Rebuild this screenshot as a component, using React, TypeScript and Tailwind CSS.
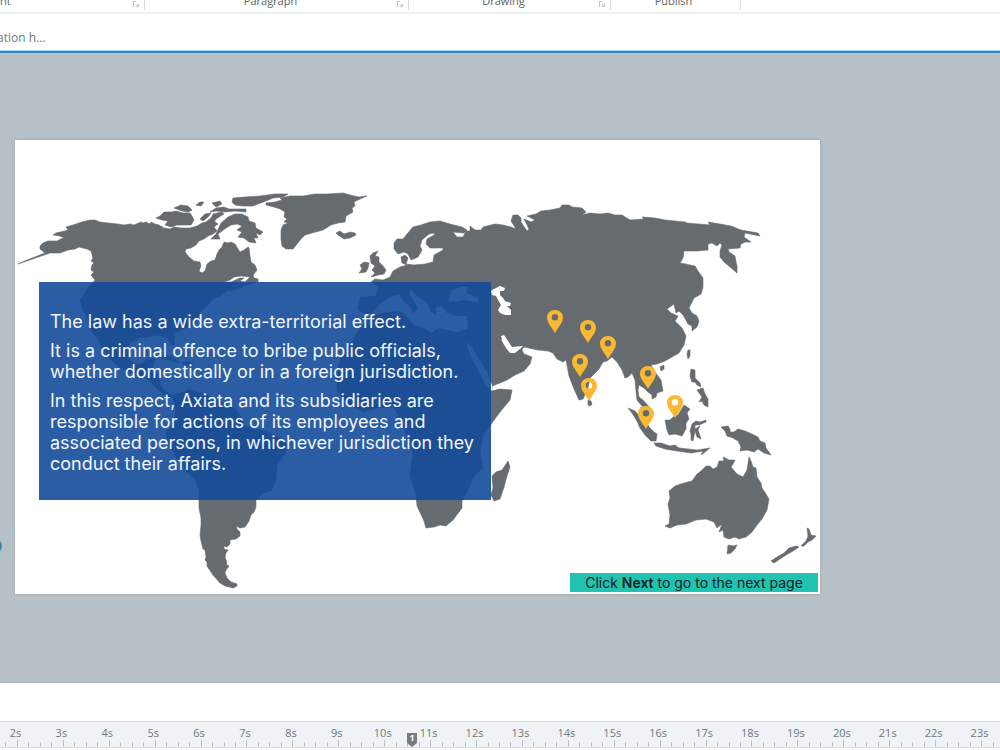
const LAND: string[] = [
  // North and South America
  'M18 264 L27 260 45 253 40 249 40 246 43 243 48 241 57 241 61 239 64 238 60 236 53 235 56 233 65 231 68 230 66 227 73 225 82 222 90 220 95 220 100 222 108 223 118 224 124 225 130 224 134 225 141 222 143 223 146 222 150 224 151 222 155 224 159 225 164 228 170 229 174 227 181 228 190 228 197 226 202 223 206 222 212 217 214 221 218 224 214 227 217 231 213 234 208 236 204 239 199 241 196 245 191 248 186 249 185 252 189 257 194 261 200 262 201 266 199 271 202 273 205 271 207 264 211 261 215 260 217 254 219 250 222 247 224 242 228 243 231 242 235 244 238 249 240 252 244 250 248 247 249 248 250 256 251 262 255 265 257 270 254 274 250 277 241 276 234 277 230 280 224 282 231 282 240 278 244 278 240 281 245 282 249 278 253 274 254 278 258 279 258 282 244 286 238 289 227 291 221 296 213 299 208 305 201 311 198 316 195 323 186 328 175 333 174 339 175 345 171 345 167 338 158 335 149 337 139 338 130 343 127 350 128 358 135 364 142 364 147 359 156 359 153 365 152 372 160 376 160 385 165 391 172 395 180 393 189 389 195 392 206 394 212 399 224 403 234 408 240 414 244 426 253 429 266 431 278 437 287 444 285 454 277 465 276 479 272 490 262 494 256 500 256 507 254 512 251 515 249 521 245 527 240 528 236 526 237 529 240 532 240 536 236 539 230 540 230 544 227 547 224 546 224 549 228 550 226 553 225 557 227 563 226 564 229 566 226 570 225 573 227 578 231 582 237 584 237 586 233 588 225 586 220 583 213 575 207 566 207 562 205 560 206 557 205 550 203 549 201 541 200 535 201 526 201 518 199 508 199 490 195 480 185 470 176 457 168 443 166 433 174 422 176 411 173 398 165 396 156 388 148 379 134 374 119 367 109 358 102 347 97 338 92 332 89 322 83 310 80 300 87 289 95 280 91 275 94 272 91 270 92 265 94 263 91 261 93 258 91 251 87 249 79 247 75 249 68 250 60 253 50 253 Z',
  // Canadian Arctic islands
  'M156 218 L160 216 164 212 171 212 176 211 183 213 190 213 192 216 194 220 191 225 184 225 177 225 171 227 165 225 168 221 162 220 Z',
  'M174 208 L181 205 188 206 192 210 188 212 182 211 Z',
  'M196 205 L200 202 204 202 201 206 Z',
  'M212 203 L220 201 222 204 216 207 Z',
  'M210 212 L216 208 224 207 229 209 246 209 246 212 235 211 225 212 216 211 Z',
  'M233 198 L245 197 260 196 275 194 288 194 283 197 273 198 266 201 258 204 253 206 242 206 235 205 232 202 Z',
  'M200 219 L205 214 211 213 208 217 203 221 Z',
  'M213 214 L222 212 224 214 216 219 213 224 210 222 Z',
  'M221 223 L228 217 235 214 242 214 248 217 249 221 255 223 256 228 263 232 260 235 256 233 258 238 254 238 256 243 249 242 244 238 238 237 242 232 237 230 242 226 237 224 231 225 226 228 218 234 220 239 211 239 216 234 Z',
  // Greenland and Iceland
  'M266 203 L275 202 282 200 280 198 290 196 303 196 315 194 327 194 343 193 354 196 359 197 367 196 360 199 354 202 355 206 352 208 353 212 346 216 345 222 338 223 331 225 323 230 312 233 305 235 301 239 297 244 293 249 286 249 282 246 281 239 281 230 283 225 288 223 284 222 287 219 284 217 285 212 280 209 274 207 266 205 Z',
  'M336 233 L340 231 344 234 350 232 355 233 356 235 350 238 344 239 338 235 Z',
  // Britain and Ireland
  'M370 256 L373 253 378 251 375 256 379 257 379 262 383 266 386 270 384 274 378 275 371 277 375 273 372 270 375 266 371 263 Z',
  'M360 265 L364 262 369 263 368 268 366 272 359 273 362 269 Z',
  // Europe, Asia and Africa
  'M371 282 L375 279 383 280 390 277 393 271 400 267 407 265 402 263 401 257 405 255 408 258 406 264 414 265 425 264 433 262 434 255 443 250 443 248 430 248 426 244 427 239 434 235 435 233 429 234 422 240 420 246 422 250 418 257 411 260 408 254 404 252 398 254 394 249 394 243 397 239 403 239 407 234 413 227 421 225 430 222 440 221 450 224 462 227 467 230 464 233 453 232 457 237 463 237 466 231 470 231 470 226 475 230 481 230 483 227 495 224 503 225 511 227 516 229 511 221 513 215 518 215 521 218 521 222 527 231 529 229 524 219 531 222 535 220 527 216 536 214 541 211 550 210 560 208 562 205 569 205 572 207 582 208 586 212 582 215 590 213 600 214 608 213 615 215 622 215 630 220 644 219 642 217 655 218 665 220 685 222 687 223 710 225 708 222 720 224 731 226 741 230 758 233 760 236 745 233 744 237 751 242 745 242 741 244 740 248 728 249 729 252 735 256 736 262 737 266 737 273 730 267 724 262 720 257 720 251 722 245 720 243 717 246 712 243 708 244 708 250 697 251 684 251 683 258 680 263 686 264 690 265 695 266 698 271 703 278 703 287 701 294 694 298 689 308 692 313 697 316 699 321 697 327 692 331 692 326 688 324 683 315 679 311 676 313 674 304 667 309 671 313 678 316 675 321 682 328 686 336 684 345 679 353 672 357 665 361 657 364 651 365 655 372 661 380 663 391 657 393 656 397 652 399 652 395 648 392 644 388 639 385 638 390 639 397 643 400 651 409 649 411 641 405 637 400 636 391 635 380 632 373 628 377 625 378 622 370 617 362 612 357 607 361 603 362 599 369 590 378 588 388 583 399 579 400 574 389 569 376 566 360 563 362 557 359 553 353 548 351 538 350 524 347 521 351 513 353 508 346 503 337 501 340 504 345 509 351 515 352 521 348 524 354 532 357 530 364 524 371 515 375 507 380 500 383 492 386 492 391 500 389 512 390 510 400 500 412 492 423 483 436 480 453 483 467 473 478 469 488 462 501 462 508 453 520 446 526 440 525 434 527 426 528 424 521 417 506 416 495 410 475 413 453 407 437 402 422 393 407 377 408 363 412 347 403 337 390 337 373 340 360 350 345 357 333 367 320 366 314 358 310 360 297 376 296 378 287 Z',
  'M508 461 L510 467 507 476 504 487 500 499 494 501 491 495 493 488 492 476 496 472 502 470 Z',
  'M588 400 L591 401 592 404 590 406 588 405 Z',
  // South-east Asia
  'M628 408 L635 411 641 418 645 421 650 428 654 432 657 434 656 441 651 441 645 435 640 428 637 421 632 413 Z',
  'M641 407 L649 408 652 412 650 420 643 419 640 413 Z',
  'M654 443 L661 443 670 446 675 445 679 448 688 449 697 450 710 448 705 452 701 455 703 451 691 453 677 451 665 449 656 446 Z',
  'M665 420 L670 420 673 417 678 415 684 405 690 409 687 413 689 419 686 423 686 429 682 436 675 434 669 435 667 430 Z',
  'M692 424 L696 421 700 422 706 420 706 422 699 425 695 425 695 429 700 426 698 430 701 439 697 437 695 431 693 441 691 440 691 434 690 431 Z',
  'M691 369 L695 370 695 378 700 383 701 387 697 385 695 382 692 382 690 376 Z',
  'M697 390 L703 388 705 394 708 399 708 407 704 405 702 401 699 402 702 397 Z',
  'M688 350 L690 350 690 356 688 359 687 354 Z',
  'M660 367 L664 365 664 369 661 371 Z',
  'M721 427 L728 426 730 429 730 432 734 432 738 429 745 431 752 434 758 437 760 441 765 443 766 448 771 455 764 453 758 449 754 452 747 450 740 451 741 447 738 441 733 438 727 436 725 431 Z',
  // Australia, Tasmania and New Zealand
  'M665 526 L669 524 670 515 668 504 670 498 669 491 675 486 684 483 692 481 697 474 701 471 706 466 710 466 713 469 717 467 719 461 724 461 723 457 729 460 735 460 733 464 731 467 737 474 743 477 747 470 749 457 751 461 753 467 756 468 757 477 761 483 762 488 766 494 769 499 767 510 762 519 757 525 752 532 746 537 739 539 735 537 729 539 724 537 723 530 719 532 722 524 717 528 714 522 706 519 696 520 686 524 677 525 670 528 Z',
  'M728 545 L733 546 737 545 735 549 731 553 727 554 Z',
  'M771 561 L777 557 784 553 789 548 796 546 799 547 793 551 786 555 780 559 774 563 Z',
  'M801 546 L806 541 808 536 807 528 809 529 811 535 816 536 812 540 808 542 804 546 Z',
  // Cuba and Hispaniola
  'M158 357 L167 355 176 359 180 363 171 361 Z',
  'M182 362 L191 362 193 366 184 366 Z',
]

const SEAS: string[] = [
  // Mediterranean
  'M365 314 L373 313 380 304 390 297 399 294 403 300 410 307 413 313 418 308 409 294 411 290 416 295 424 301 428 304 430 311 437 316 435 308 442 306 447 313 458 316 467 316 468 328 458 332 447 330 438 328 431 333 425 328 414 325 408 318 400 311 388 312 378 314 365 318 Z',
  // Black Sea
  'M448 301 L452 290 460 287 468 287 466 293 478 298 478 302 465 300 455 302 Z',
  // Red Sea
  'M466 342 L472 347 478 358 487 372 492 385 492 391 486 385 478 370 470 355 Z',
  // Caspian Sea
  'M491 291 L494 289 500 286 505 288 504 291 500 291 500 295 503 298 505 301 511 303 510 306 507 306 511 310 511 315 505 315 500 313 498 310 501 305 498 300 496 296 492 295 Z',
  // Persian Gulf
  'M501 336 L504 335 508 341 512 347 523 346 520 349 515 353 510 353 506 348 503 342 Z',
]

const PINS = [
  [555, 310],
  [588, 320],
  [608, 336],
  [580, 354],
  [589, 378],
  [648, 366],
  [675, 395],
  [646, 406],
]

function WorldMap() {
  return (
    <svg viewBox="15 140 805 454" className="absolute inset-0 h-full w-full" role="img" aria-label="World map">
      <g fill="#666b6f" stroke="#666b6f" strokeWidth="0.6" strokeLinejoin="round">
        {LAND.map((d) => (
          <path key={d} d={d} />
        ))}
      </g>
      <g fill="#ffffff">
        {SEAS.map((d) => (
          <path key={d} d={d} />
        ))}
      </g>
      <g fill="#fbb831">
        {PINS.map(([x, y]) => (
          <path
            key={`${x}-${y}`}
            transform={`translate(${x} ${y})`}
            fillRule="evenodd"
            d="M0 0 C-4.6 0 -8 3.3 -8 7.6 C-8 12.5 -3.5 17.2 0 23 C3.5 17.2 8 12.5 8 7.6 C8 3.3 4.6 0 0 0 Z M0 4 A3.2 3.2 0 1 1 0 10.4 A3.2 3.2 0 1 1 0 4 Z"
          />
        ))}
      </g>
    </svg>
  )
}

function Launcher({ label }: { label: string }) {
  return (
    <button type="button" aria-label={label} className="h-2 w-2 shrink-0">
      <svg viewBox="0 0 8 8" className="h-2 w-2" fill="none" stroke="#c3c7ca">
        <path d="M1.5 6V0.5H4M4 3L6 5M6.5 2.5V5.5H3.5" />
      </svg>
    </button>
  )
}

function RibbonGroup({ name, width, launcher = true }: { name: string; width: string; launcher?: boolean }) {
  return (
    <div className={`flex h-[10px] shrink-0 items-center border-r border-[#d9dcde] pr-1 ${width}`}>
      <span className="-mt-[8px] flex-1 text-center leading-[16px]">{name}</span>
      {launcher && <Launcher label={`${name} options`} />}
    </div>
  )
}

function Ruler() {
  const seconds = Array.from({ length: 22 }, (_, i) => i + 2)
  return (
    <div className="relative h-[27px] overflow-hidden border-y border-[#d5dadc] bg-[#eff3f6]">
      <div className="-ml-[6px] grid h-full w-[101%] grid-cols-22">
        {seconds.map((s) => (
          <div key={s} className="flex flex-col justify-between text-center text-[11px] text-[#6c787d]">
            <span className="pt-[3px] pr-[3px] leading-[15px]">{s}s</span>
            <div className="grid grid-cols-4 items-end">
              <i className="h-[5px] border-l border-[#bcc2c5]" />
              <i className="h-[5px] border-l border-[#bcc2c5]" />
              <i className="h-[7px] border-l border-[#bcc2c5]" />
              <i className="h-[5px] border-l border-[#bcc2c5]" />
            </div>
          </div>
        ))}
      </div>
      <button
        type="button"
        aria-label="Cue point 1"
        className="absolute bottom-0 left-[407px] h-[14px] w-[10px] bg-[#777b7c] pb-1 text-center text-[9px] leading-[10px] font-bold text-white [clip-path:polygon(0_0,100%_0,100%_72%,50%_100%,0_72%)]"
      >
        1
      </button>
    </div>
  )
}

export default function App() {
  return (
    <div className="flex min-h-screen flex-col overflow-hidden bg-white font-['Open_Sans',sans-serif]">
      <header>
        <div className="flex h-[14px] overflow-hidden border-b-2 border-[#eceff0] text-[11px] text-[#5c6164]">
          <div className="flex h-[10px] w-[145px] shrink-0 items-center justify-between border-r border-[#d9dcde] pr-1">
            <span className="-mt-[8px] leading-[16px]">nt</span>
            <Launcher label="Font options" />
          </div>
          <RibbonGroup name="Paragraph" width="w-[264px]" />
          <RibbonGroup name="Drawing" width="w-[202px]" />
          <RibbonGroup name="Publish" width="w-[130px]" launcher={false} />
        </div>
        <div className="flex h-[37px] items-center border-b border-[#a5dcf2] pt-3 text-[12px] text-[#6d7a80]">
          <span className="-ml-[3px]">ation h...</span>
        </div>
      </header>

      <main className="relative flex-1 border-t-2 border-b border-t-[#3585b8] border-b-[#a9b0b6] bg-[#b8c0c7] pt-[87px] pr-[180px] pb-[88px] pl-[15px]">
        <span className="absolute top-[486px] -left-[12px] h-[14px] w-[14px] rounded-full bg-[#3c83b5]" />
        <section className="relative flex aspect-[805/454] flex-col justify-between bg-white pt-[142px] pl-6 shadow-[0_0_3px_#9aa3ab]">
          <WorldMap />
          <div className="relative flex h-[218px] w-[452px] flex-col justify-center gap-2 bg-[#144b9a]/90 pt-[2px] pl-[11px] font-['Inter',sans-serif] text-[18px] leading-[21px] text-[#f2f6fc]">
            <p>The law has a wide extra-territorial effect.</p>
            <p>
              It is a criminal offence to bribe public officials,
              <br />
              whether domestically or in a foreign jurisdiction.
            </p>
            <p>
              In this respect, Axiata and its subsidiaries are
              <br />
              responsible for actions of its employees and
              <br />
              associated persons, in whichever jurisdiction they
              <br />
              conduct their affairs.
            </p>
          </div>
          <p className="relative mr-[2px] mb-[2px] w-[248px] self-end bg-[#21c2b0] text-center font-['Inter',sans-serif] text-[14px] leading-[19px] text-[#10201f]">
            Click <b className="font-semibold">Next</b> to go to the next page
          </p>
        </section>
      </main>

      <footer className="pt-[38px] pb-[2px]">
        <Ruler />
      </footer>
    </div>
  )
}
